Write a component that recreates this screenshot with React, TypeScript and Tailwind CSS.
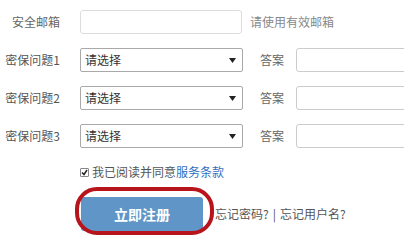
import React from "react";

const font = { fontFamily: '"Noto Sans CJK SC", "Liberation Sans", sans-serif' };

function Arrow() {
  return (
    <svg width="7" height="5" viewBox="0 0 7 5" className="absolute right-[6px] top-[9px]">
      <path d="M0 0 L7 0 L3.5 5 Z" fill="#222" />
    </svg>
  );
}

function QuestionRow({ n }: { n: number }) {
  return (
    <div className="flex items-center h-[24px] whitespace-nowrap">
      <div className="w-[60px] shrink-0 text-right text-[12px] text-[#555] leading-none">密保问题{n}</div>
      <div className="relative shrink-0 ml-[20px] w-[163px] h-[24px] border border-[#a9a9a9] bg-white rounded-[2px]">
        <span className="absolute left-[4px] top-[5px] text-[12px] leading-none text-[#333]">请选择</span>
        <Arrow />
      </div>
      <div className="shrink-0 ml-[17px] text-[12px] text-[#666] leading-none">答案</div>
      <div className="shrink-0 ml-[12px] w-[140px] h-[24px] border border-[#ccc] rounded-[3px] bg-white" />
    </div>
  );
}

export default function App() {
  return (
    <div className="w-[404px] h-[240px] bg-white overflow-hidden pt-[10px]" style={font}>
      <div className="flex flex-col gap-[14px]">
        <div className="flex items-center h-[24px] whitespace-nowrap">
          <div className="w-[60px] shrink-0 text-right text-[12px] text-[#666] leading-none">安全邮箱</div>
          <div className="shrink-0 ml-[20px] w-[162px] h-[24px] border border-[#ddd] rounded-[3px] bg-white" />
          <div className="shrink-0 ml-[8px] text-[12px] text-[#888] leading-none">请使用有效邮箱</div>
        </div>
        <QuestionRow n={1} />
        <QuestionRow n={2} />
        <QuestionRow n={3} />
      </div>

      <div className="flex items-center h-[14px] mt-[17px] ml-[80px] whitespace-nowrap">
        <div className="w-[9px] h-[9px] shrink-0 border border-[#888] rounded-[1px] bg-white flex items-center justify-center">
          <svg width="7" height="7" viewBox="0 0 7 7">
            <path d="M1 3.5 L3 5.5 L6 1" stroke="#222" strokeWidth="1.5" fill="none" />
          </svg>
        </div>
        <span className="ml-[3px] text-[12px] text-[#555] leading-none">
          我已阅读并同意<span className="text-[#2f6fc1]">服务条款</span>
        </span>
      </div>

      <div className="flex items-center mt-[18px] ml-[81px] whitespace-nowrap">
        <div className="relative shrink-0">
          <div className="w-[122px] h-[34px] rounded-[3px] bg-[#5f96c7] flex items-center justify-center">
            <span className="text-white text-[14px] font-bold leading-none">立即注册</span>
          </div>
          <div className="absolute left-[-6px] top-[-10px] right-[-11px] bottom-[-4px] border-[4px] border-[#b8141c] rounded-[22px]" />
        </div>
        <div className="shrink-0 ml-[12px] text-[12px] text-[#555] leading-none flex items-center">
          <span>忘记密码?</span>
          <span className="mx-[4px]">|</span>
          <span>忘记用户名?</span>
        </div>
      </div>
    </div>
  );
}
